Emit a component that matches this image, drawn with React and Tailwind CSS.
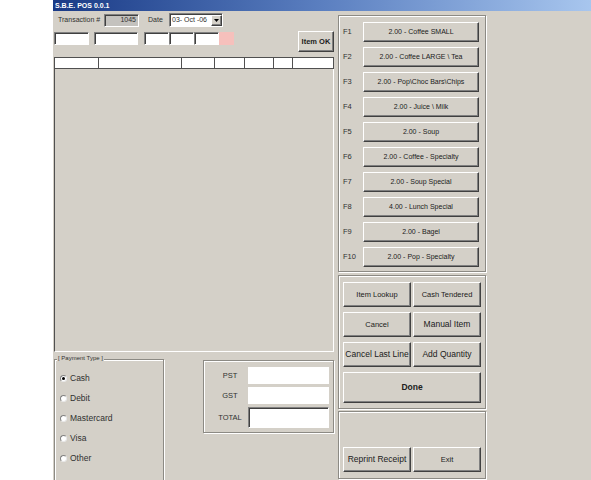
const font = "font-['Liberation_Sans',Arial,sans-serif]";

const raised =
  'bg-[#d4d0c8] border border-t-white border-l-white border-r-[#404040] border-b-[#404040] shadow-[inset_-1px_-1px_0_#808080]';
const sunken =
  'border border-t-[#808080] border-l-[#808080] border-r-white border-b-white shadow-[inset_1px_1px_0_#404040]';
const group = 'border border-[#8c8a84] shadow-[1px_1px_0_white,inset_1px_1px_0_white]';

const fkeys = [
  ['F1', '2.00 - Coffee SMALL'],
  ['F2', '2.00 - Coffee LARGE \\ Tea'],
  ['F3', '2.00 - Pop\\Choc Bars\\Chips'],
  ['F4', '2.00 - Juice \\ Milk'],
  ['F5', '2.00 - Soup'],
  ['F6', '2.00 - Coffee - Specialty'],
  ['F7', '2.00 - Soup Special'],
  ['F8', '4.00 - Lunch Special'],
  ['F9', '2.00 - Bagel'],
  ['F10', '2.00 - Pop - Specialty'],
];

const payments = ['Cash', 'Debit', 'Mastercard', 'Visa', 'Other'];

// header columns of the sale grid (widths in px)
const cols = [44, 83, 33, 30, 29, 19, 42];

function Button({ children, className = '' }) {
  return (
    <div className={`${raised} flex items-center justify-center text-[#202020] ${className}`}>
      {children}
    </div>
  );
}

export default function App() {
  return (
    <div className={`${font} w-[591px] h-[480px] overflow-hidden flex bg-white`}>
      <div className="w-[53px] shrink-0 bg-white" />

      <div className="flex-1 flex flex-col bg-[#d4d0c8]">
        {/* -- Title bar -- */}
        <div className="h-[11px] shrink-0 bg-gradient-to-r from-[#1a3a86] via-[#5b7fc0] to-[#a8c6ee] flex items-center pl-[2px]">
          <span className="text-white text-[7px] font-bold leading-none">S.B.E. POS 0.0.1</span>
        </div>

        <div className="flex flex-1 pl-[1px]">
          {/* -- Left column -- */}
          <div className="w-[280px] shrink-0 flex flex-col">
            <div className="h-[16px] mt-[1px] flex items-center text-[7px] text-[#303030]">
              <span className="w-[50px] pl-[4px]">Transaction #</span>
              <div className={`${sunken} w-[35px] h-[13px] bg-[#c4c2be] flex items-center justify-end pr-[2px]`}>
                1045
              </div>
              <span className="ml-[9px] w-[21px]">Date</span>
              <div className={`${sunken} w-[54px] h-[14px] bg-white flex items-center pl-[2px]`}>
                <span className="flex-1">03- Oct -06</span>
                <div className={`${raised} w-[11px] h-[11px] flex items-center justify-center`}>
                  <svg width="5" height="3" viewBox="0 0 5 3">
                    <path d="M0 0h5L2.5 3z" fill="#000" />
                  </svg>
                </div>
              </div>
            </div>

            <div className="h-[21px] mt-[3px] flex items-start">
              <div className={`${sunken} mt-[1px] w-[35px] h-[13px] bg-white`} />
              <div className={`${sunken} mt-[1px] ml-[5px] w-[44px] h-[13px] bg-white`} />
              <div className={`${sunken} mt-[1px] ml-[6px] w-[25px] h-[13px] bg-white`} />
              <div className={`${sunken} mt-[1px] w-[25px] h-[13px] bg-white`} />
              <div className={`${sunken} mt-[1px] w-[25px] h-[13px] bg-white`} />
              <div className="mt-[1px] w-[15px] h-[13px] bg-[#f6c0bc]" />
              <Button className="ml-auto w-[36px] h-[21px] text-[7.5px] font-bold">Item OK</Button>
            </div>

            {/* sale grid header */}
            <div className="mt-[5px] h-[12px] flex border border-[#505050] bg-white">
              {cols.map((w, i) => (
                <div
                  key={i}
                  className={`h-full ${i < cols.length - 1 ? 'border-r border-[#505050]' : 'flex-1'}`}
                  style={{ width: i < cols.length - 1 ? w : undefined }}
                />
              ))}
            </div>
            <div className="h-[283px] border-l border-l-[#505050] border-r border-r-white border-b border-b-white bg-[#d4d0c8]" />

            {/* -- Payment / totals -- */}
            <div className="flex">
              <div className={`${group} relative mt-[7px] w-[110px] h-[140px]`}>
                <span className="absolute -top-[5px] left-[2px] bg-[#d4d0c8] text-[6px] text-[#303030] px-px leading-none">
                  [ Payment Type ]
                </span>
                <div className="flex flex-col gap-[8px] pt-[12px] pl-[5px]">
                  {payments.map((p, i) => (
                    <div key={p} className="h-[12px] flex items-center gap-[3px] text-[8.5px] text-[#303030]">
                      <span className="w-[7px] h-[7px] rounded-full bg-white border border-t-[#808080] border-l-[#808080] border-r-[#e8e8e8] border-b-[#e8e8e8] flex items-center justify-center">
                        {i === 0 && <span className="w-[3px] h-[3px] rounded-full bg-black" />}
                      </span>
                      {p}
                    </div>
                  ))}
                </div>
              </div>

              <div className={`${group} ml-[39px] mt-[8px] w-[131px] h-[73px] flex flex-col pt-[6px] pl-[8px] gap-[3px] text-[7.5px] text-[#303030]`}>
                <div className="flex items-center">
                  <span className="w-[36px] text-center">PST</span>
                  <div className="w-[81px] h-[17px] bg-white" />
                </div>
                <div className="flex items-center">
                  <span className="w-[36px] text-center">GST</span>
                  <div className="w-[81px] h-[17px] bg-white" />
                </div>
                <div className="flex items-center">
                  <span className="w-[36px] text-center">TOTAL</span>
                  <div className={`${sunken} w-[81px] h-[21px] bg-white`} />
                </div>
              </div>
            </div>
          </div>

          {/* -- Right column -- */}
          <div className="ml-[4px] w-[148px] shrink-0 flex flex-col">
            <div className={`${group} mt-[4px] h-[257px] flex flex-col gap-[5px] pt-[6px]`}>
              {fkeys.map(([k, label]) => (
                <div key={k} className="h-[20px] flex items-center">
                  <span className="w-[24px] pl-[4px] text-[7.5px] text-[#303030]">{k}</span>
                  <Button className="w-[116px] h-[20px] text-[7px]">{label}</Button>
                </div>
              ))}
            </div>

            <div className={`${group} mt-[3px] h-[134px] pt-[6px] pl-[4px]`}>
              <div className="grid grid-cols-[68px_68px] gap-x-[2px] gap-y-[5px] text-[8.5px]">
                <Button className="h-[25px] text-[7.5px]">Item Lookup</Button>
                <Button className="h-[25px] text-[7.5px]">Cash Tendered</Button>
                <Button className="h-[25px] text-[7.5px]">Cancel</Button>
                <Button className="h-[25px]">Manual Item</Button>
                <Button className="h-[25px]">Cancel Last Line</Button>
                <Button className="h-[25px]">Add Quantity</Button>
                <Button className="col-span-2 h-[31px] font-bold">Done</Button>
              </div>
            </div>

            <div className={`${group} mt-[2px] h-[68px] flex items-end pb-[6px] pl-[4px] gap-[2px] text-[8.5px]`}>
              <Button className="w-[68px] h-[25px]">Reprint Receipt</Button>
              <Button className="w-[68px] h-[25px] text-[7.5px]">Exit</Button>
            </div>
          </div>
        </div>
      </div>
    </div>
  );
}
